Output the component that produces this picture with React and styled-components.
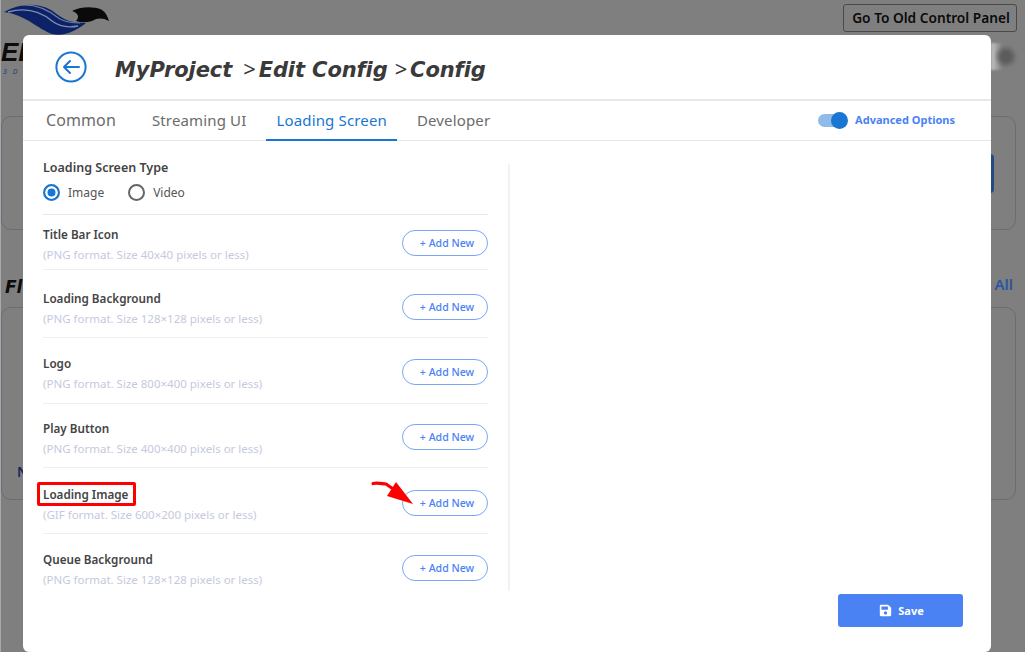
import React from "react";
import styled, { createGlobalStyle } from "styled-components";
import { FaSave } from "react-icons/fa";

const rows = [
  { title: "Title Bar Icon", hint: "(PNG format. Size 40x40 pixels or less)", top: 11, bottom: 6 },
  { title: "Loading Background", hint: "(PNG format. Size 128×128 pixels or less)", top: 20, bottom: 10 },
  { title: "Logo", hint: "(PNG format. Size 800×400 pixels or less)", top: 17, bottom: 11 },
  { title: "Play Button", hint: "(PNG format. Size 400×400 pixels or less)", top: 16, bottom: 10 },
  { title: "Loading Image", hint: "(GIF format. Size 600×200 pixels or less)", top: 18, bottom: 10, marked: true },
  { title: "Queue Background", hint: "(PNG format. Size 128×128 pixels or less)", top: 17, bottom: 3 },
];

const tabs = ["Common", "Streaming UI", "Loading Screen", "Developer"];

function App() {
  return (
    <Page>
      <GlobalStyle />
      <TopBar>
        <LogoBox>
          <svg width="110" height="36" viewBox="0 0 110 36">
            <path d="M2 11C22 0 42 2 56 14C64 20 72 22 84 22C74 30 62 36 50 33C36 28 24 14 2 11Z" fill="#0d2266" />
            <path d="M6 11C24 6 38 10 50 20C58 26 66 27 76 25" fill="none" stroke="#7f8db0" strokeWidth="1.4" />
            <path d="M20 4C36 3 48 10 58 18C64 21 70 22 78 22" fill="none" stroke="#6f7fa6" strokeWidth="1.2" />
            <path d="M70 10C80 5 92 6 98 8C103 10 105 14 107 20C102 17 98 17 94 18C88 22 80 22 74 20C78 16 76 12 70 10Z" fill="#0a0a0a" />
          </svg>
          <LogoWord>EL</LogoWord>
          <LogoSub>3 D</LogoSub>
        </LogoBox>
        <OldPanelButton>Go To Old Control Panel</OldPanelButton>
      </TopBar>
      <BlurRow>
        <BlurBlob />
      </BlurRow>
      <BackCard>
        <BackCardButton />
      </BackCard>
      <SectionHead>
        <SectionName>Fl</SectionName>
        <SectionLink>All</SectionLink>
      </SectionHead>
      <BackCardTall>
        <BackCardLetter>N</BackCardLetter>
      </BackCardTall>

      <Modal>
        <ModalHeader>
          <BackButton aria-label="Back">
            <svg width="32" height="32" viewBox="0 0 32 32" fill="none" stroke="#1976d2" strokeWidth="2" strokeLinecap="round" strokeLinejoin="round">
              <circle cx="16" cy="16" r="14.6" />
              <path d="M24 16H9M15 10l-6 6 6 6" />
            </svg>
          </BackButton>
          <Crumbs>
            MyProject<Sep $left={11}>&gt;</Sep>Edit Config<Sep $left={7}>&gt;</Sep>Config
          </Crumbs>
        </ModalHeader>
        <TabBar>
          <TabList>
            {tabs.map((tab) => (
              <Tab key={tab} $active={tab === "Loading Screen"}>
                {tab}
              </Tab>
            ))}
          </TabList>
          <AdvancedToggle>
            <ToggleTrack>
              <ToggleThumb />
            </ToggleTrack>
            <AdvancedLabel>Advanced Options</AdvancedLabel>
          </AdvancedToggle>
        </TabBar>
        <ModalBody>
          <SettingsColumn>
            <TypeBlock>
              <TypeTitle>Loading Screen Type</TypeTitle>
              <RadioRow>
                <RadioLabel>
                  <RadioMark $checked />
                  Image
                </RadioLabel>
                <RadioLabel>
                  <RadioMark />
                  Video
                </RadioLabel>
              </RadioRow>
            </TypeBlock>
            {rows.map((row, i) => (
              <AssetRow key={row.title} $top={row.top} $bottom={row.bottom} $last={i === rows.length - 1}>
                <div>
                  <RowTitle $marked={row.marked}>{row.title}</RowTitle>
                  <RowHint>{row.hint}</RowHint>
                </div>
                <ButtonWrap>
                  {row.marked && (
                    <Arrow width="46" height="26" viewBox="0 0 46 26">
                      <path d="M2 3.5C6 2.5 10 3.5 15 4L25 11" fill="none" stroke="#f00" strokeWidth="3.2" strokeLinecap="round" />
                      <path d="M25 2L16 16L42 24Z" fill="#f00" />
                    </Arrow>
                  )}
                  <AddButton>+ Add New</AddButton>
                </ButtonWrap>
              </AssetRow>
            ))}
          </SettingsColumn>
          <PreviewColumn />
        </ModalBody>
        <ModalFooter>
          <SaveButton>
            <FaSave size={13} />
            Save
          </SaveButton>
        </ModalFooter>
      </Modal>
    </Page>
  );
}

export default App;

const GlobalStyle = createGlobalStyle`
  html, body {
    margin: 0;
    height: 100%;
    overflow: hidden;
    background: #7f7f7f;
  }
  * {
    box-sizing: border-box;
  }
`;

const Page = styled.div`
  position: relative;
  width: 1025px;
  height: 652px;
  overflow: hidden;
  background: #7f7f7f;
  border-left: 1px solid #a8a8a8;
  font-family: "Noto Sans", sans-serif;
`;

const TopBar = styled.div`
  display: flex;
  justify-content: space-between;
  align-items: flex-start;
  height: 43px;
  padding: 4px 8px 0 1px;
`;

const LogoBox = styled.div`
  position: relative;
  margin-top: -3px;
  width: 110px;
`;

const LogoWord = styled.div`
  position: absolute;
  left: -1px;
  top: 36px;
  font: italic 700 26px "Liberation Sans", sans-serif;
  color: #0c0c0c;
`;

const LogoSub = styled.div`
  position: absolute;
  left: 1px;
  top: 66px;
  font: italic 400 7px "Noto Sans", sans-serif;
  letter-spacing: 2px;
  color: #1c3c7c;
`;

const OldPanelButton = styled.button`
  width: 174px;
  height: 28px;
  padding: 0 0 2px 2px;
  border: 1px solid #4a4a4a;
  border-radius: 3px;
  background: #7f7f7f;
  color: #0b0b0b;
  font: 600 13.7px "Noto Sans", sans-serif;
`;

const BlurRow = styled.div`
  display: flex;
  justify-content: flex-end;
  height: 73px;
  padding-right: 7px;
`;

const BlurBlob = styled.div`
  width: 27px;
  height: 27px;
  background: radial-gradient(circle at 55% 50%, #5c5c5c 0 24%, transparent 58%),
    linear-gradient(90deg, #c4c4c4, #7f7f7f 42%);
  filter: blur(1px);
`;

const BackCard = styled.div`
  display: flex;
  justify-content: flex-end;
  align-items: center;
  width: 1015px;
  height: 114px;
  padding-right: 21px;
  border: 1px solid #6c6c78;
  border-radius: 10px;
`;

const BackCardButton = styled.div`
  width: 40px;
  height: 39px;
  border-radius: 4px;
  background: #234a84;
`;

const SectionHead = styled.div`
  display: flex;
  justify-content: space-between;
  align-items: center;
  height: 77px;
  padding: 36px 12px 0 4px;
`;

const SectionName = styled.div`
  font: italic 700 17px "DejaVu Sans", sans-serif;
  color: #0c0c0c;
`;

const SectionLink = styled.div`
  margin-bottom: 5px;
  font: 600 15px "Noto Sans", sans-serif;
  color: #2a55a0;
`;

const BackCardTall = styled.div`
  position: relative;
  width: 1015px;
  height: 193px;
  padding: 154px 0 0 15px;
  border: 1px solid #6c6c78;
  border-radius: 10px;
`;

const BackCardLetter = styled.div`
  font: 600 14px "Noto Sans", sans-serif;
  color: #14285a;
`;

const Modal = styled.div`
  position: absolute;
  left: 22px;
  top: 35px;
  display: flex;
  flex-direction: column;
  width: 968px;
  height: 617px;
  background: #fff;
  border-radius: 6px;
`;

const ModalHeader = styled.div`
  display: flex;
  align-items: center;
  gap: 28px;
  height: 66px;
  padding-left: 32px;
  border-bottom: 2px solid #e8e8e8;
`;

const BackButton = styled.button`
  display: flex;
  padding: 0;
  border: 0;
  background: none;
`;

const Crumbs = styled.div`
  padding-top: 2px;
  font: italic 700 21px "DejaVu Sans", sans-serif;
  letter-spacing: -0.1px;
  color: #3a3a3a;
  white-space: nowrap;
`;

const Sep = styled.span`
  margin: 0 3px 0 ${(p) => p.$left}px;
  font: 400 22px "Noto Sans", sans-serif;
`;

const TabBar = styled.div`
  display: flex;
  justify-content: space-between;
  align-items: stretch;
  height: 40px;
  padding: 0 36px 0 13px;
  border-bottom: 1px solid #e6e6e6;
`;

const TabList = styled.div`
  display: flex;
  gap: 10px;
`;

const Tab = styled.div`
  display: flex;
  align-items: center;
  padding: 0 10px;
  margin-bottom: -1px;
  border-bottom: 2px solid ${(p) => (p.$active ? "#1976d2" : "transparent")};
  color: ${(p) => (p.$active ? "#1976d2" : "#6b6b6b")};
  font-size: 15px;
  letter-spacing: 0.15px;
  &:first-child {
    margin-right: 6px;
    font-size: 16px;
    letter-spacing: 0.1px;
  }
`;

const AdvancedToggle = styled.div`
  display: flex;
  align-items: center;
  gap: 8px;
  color: #4a82f4;
  font-size: 11px;
  font-weight: 700;
`;

const AdvancedLabel = styled.span`
  margin-bottom: 2px;
`;

const ToggleTrack = styled.div`
  position: relative;
  width: 29px;
  height: 13px;
  border-radius: 7px;
  background: #8fbbe9;
`;

const ToggleThumb = styled.div`
  position: absolute;
  right: -1px;
  top: -2px;
  width: 17px;
  height: 17px;
  border-radius: 50%;
  background: #1976d2;
`;

const ModalBody = styled.div`
  display: flex;
  padding: 18px 0 0 20px;
`;

const SettingsColumn = styled.div`
  width: 445px;
`;

const PreviewColumn = styled.div`
  align-self: stretch;
  width: 2px;
  margin-left: 20px;
  margin-top: 5px;
  background: #f2f2f2;
`;

const TypeBlock = styled.div`
  height: 56px;
  border-bottom: 1px solid #e6e8f0;
`;

const RowTitle = styled.div`
  position: relative;
  color: #444;
  font-size: 11.7px;
  font-weight: 600;
  line-height: 17px;
  ${(p) =>
    p.$marked &&
    `
    &::after {
      content: "";
      box-sizing: border-box;
      position: absolute;
      left: -6px;
      top: -4px;
      width: 99px;
      height: 24px;
      border: 3px solid #f00;
      border-radius: 2px;
    }
  `}
`;

const TypeTitle = styled(RowTitle)`
  font-size: 12.5px;
`;

const RadioRow = styled.div`
  display: flex;
  gap: 24px;
  margin-top: 8px;
`;

const RadioLabel = styled.label`
  display: flex;
  align-items: center;
  gap: 8px;
  color: #555;
  font-size: 12px;
`;

const RadioMark = styled.span`
  width: 17px;
  height: 17px;
  border: 2px solid ${(p) => (p.$checked ? "#1976d2" : "#666")};
  border-radius: 50%;
  background: ${(p) => (p.$checked ? "#1976d2" : "#fff")};
  box-shadow: inset 0 0 0 2.5px #fff;
`;

const AssetRow = styled.div`
  display: flex;
  justify-content: space-between;
  align-items: center;
  padding: ${(p) => p.$top}px 0 ${(p) => p.$bottom}px;
  border-bottom: ${(p) => (p.$last ? "0" : "1px solid #eceef3")};
`;

const RowHint = styled.div`
  margin-top: 3px;
  color: #c5c9de;
  font-size: 11.5px;
  line-height: 17px;
`;

const ButtonWrap = styled.div`
  position: relative;
  margin-bottom: 3px;
`;

const Arrow = styled.svg`
  position: absolute;
  left: -31px;
  top: -10px;
`;

const AddButton = styled.button`
  display: block;
  width: 86px;
  height: 26px;
  padding: 0 0 0 4px;
  border: 1px solid #7aa5f6;
  border-radius: 13px;
  background: #fff;
  color: #4a82f4;
  font: 500 10.6px "Noto Sans", sans-serif;
`;

const ModalFooter = styled.div`
  position: absolute;
  right: 28px;
  top: 559px;
`;

const SaveButton = styled.button`
  display: flex;
  justify-content: center;
  align-items: center;
  gap: 6px;
  width: 125px;
  height: 33px;
  padding: 0 0 0 2px;
  border: 0;
  border-radius: 3px;
  background: #4a82f4;
  color: #fff;
  font: 700 11px "Noto Sans", sans-serif;
`;
